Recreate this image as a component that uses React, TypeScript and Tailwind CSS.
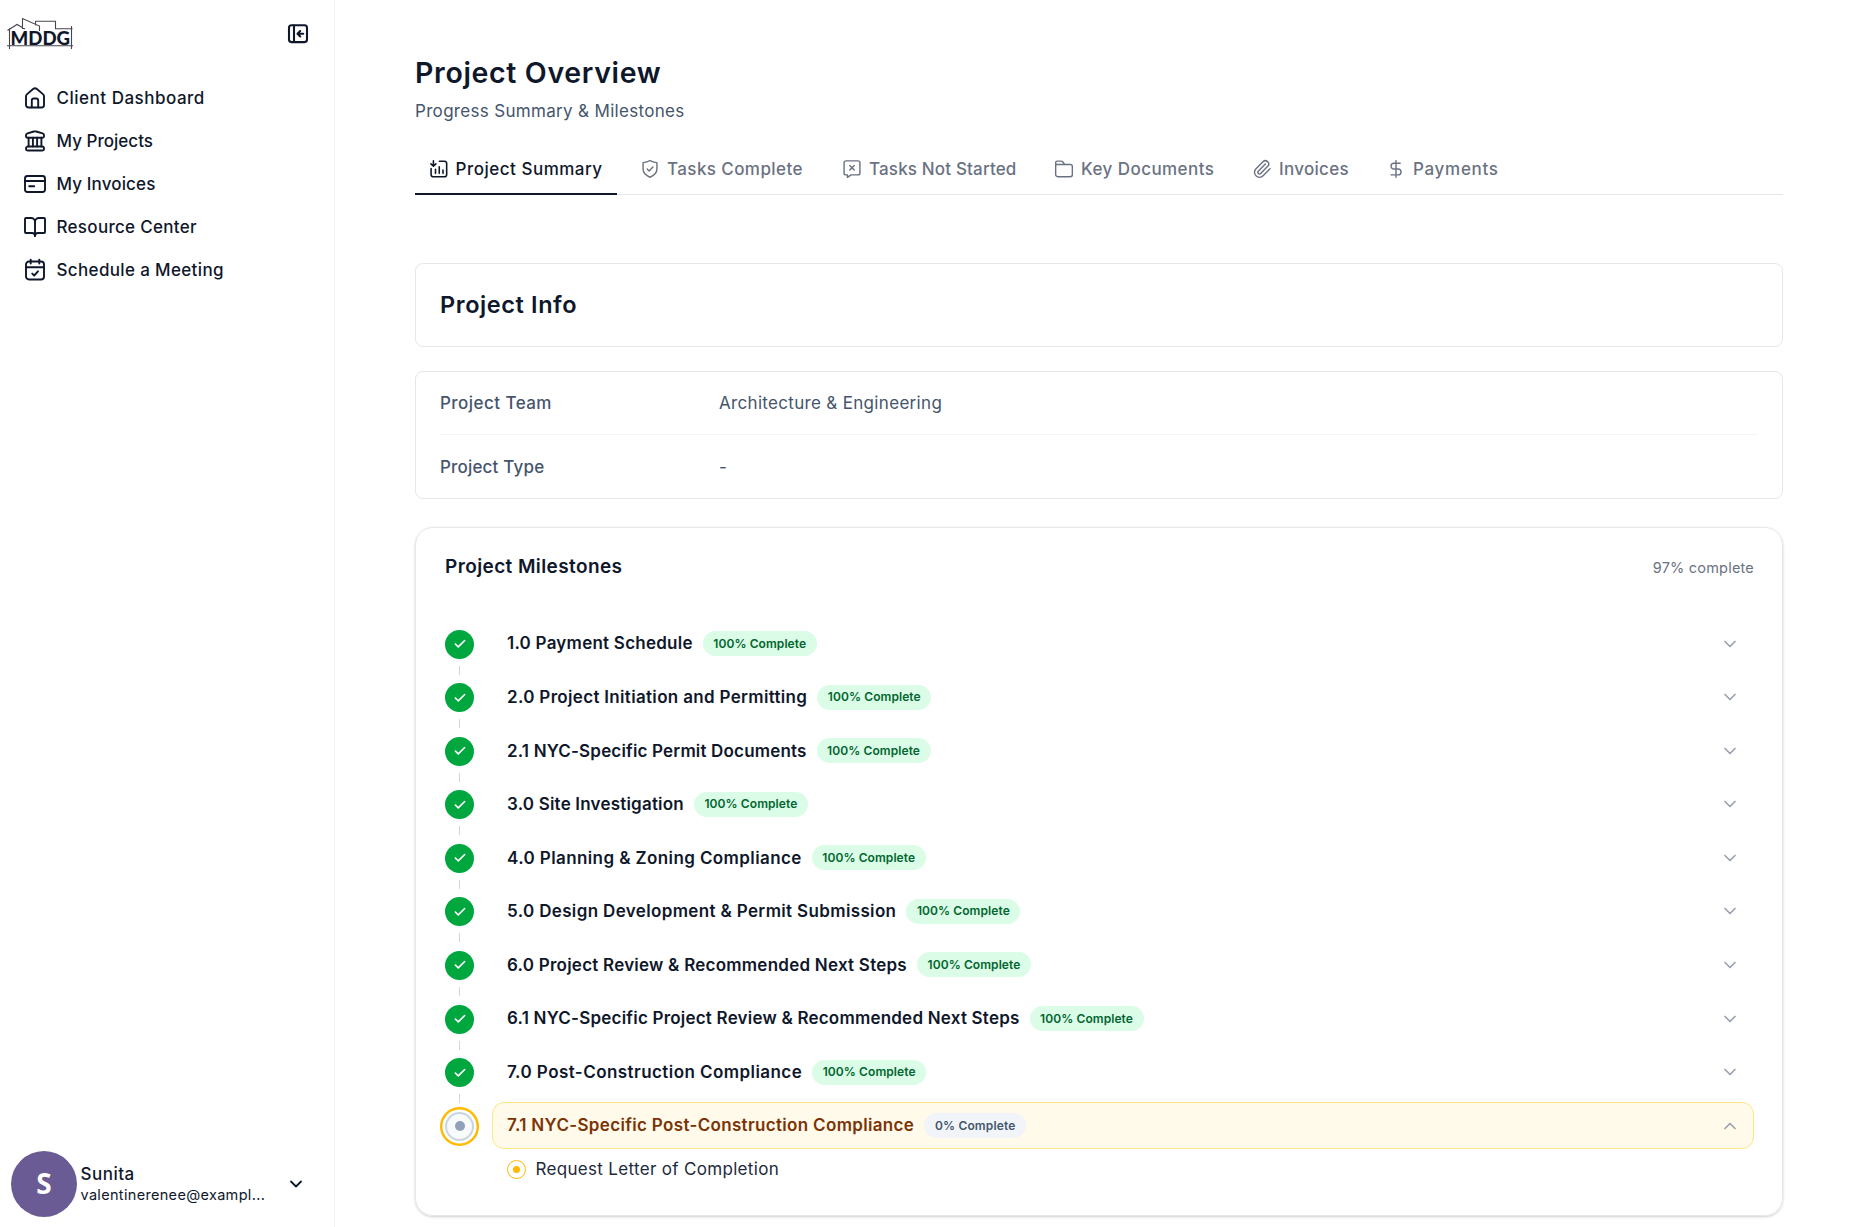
import type { ReactNode } from 'react';
import { BookOpen, Check, ChevronDown, ChevronUp, DollarSign, Paperclip } from 'lucide-react';

const Icon = ({ size = 24, stroke = 1.9, children }: { size?: number; stroke?: number; children: ReactNode }) => (
  <svg width={size} height={size} viewBox="0 0 24 24" fill="none" stroke="currentColor" strokeWidth={stroke} strokeLinecap="round" strokeLinejoin="round" className="shrink-0">
    {children}
  </svg>
);

const HomeIcon = () => (
  <Icon>
    <path d="M3 10.4c0-.9.4-1.700 1.100-2.300l6-5.100a3 3 0 0 1 3.800 0l6 5.100c.7.6 1.100 1.400 1.100 2.300V19a2.500 2.500 0 0 1-2.500 2.500h-13A2.500 2.500 0 0 1 3 19z" />
    <path d="M8.800 21.300v-6.800a2 2 0 0 1 2-2h2.400a2 2 0 0 1 2 2v6.800" />
  </Icon>
);

const BankIcon = () => (
  <Icon stroke={1.9}>
    <path d="M3 6.200c0-1 .6-1.500 1.500-1.800l6.300-1.900c.8-.2 1.600-.2 2.400 0l6.300 1.900c.9.3 1.500.8 1.500 1.800v1c0 .9-.7 1.500-1.500 1.500h-15C3.700 8.700 3 8.100 3 7.200z" />
    <path d="M5.600 8.800v8.600M9.900 8.800v8.600M14.100 8.800v8.600M18.400 8.800v8.600" />
    <path d="M5 17.500h14a2 2 0 0 1 2 2v.5a1.500 1.500 0 0 1-1.500 1.500h-15A1.500 1.500 0 0 1 3 20v-.5a2 2 0 0 1 2-2z" />
  </Icon>
);

const CardIcon = () => (
  <Icon>
    <rect x="2" y="4" width="20" height="16" rx="2.500" />
    <path d="M2.200 9h19.600M6.200 14.200h5" />
  </Icon>
);

const CalendarIcon = () => (
  <Icon>
    <rect x="3" y="3.500" width="18" height="18" rx="3" />
    <path d="M3.200 9.300h17.600M7.700 1.600v4M16.300 1.600v4M9.200 15.600l2 1.900 3.800-4.200" />
  </Icon>
);

const CollapseIcon = () => (
  <Icon stroke={2.1}>
    <rect x="3" y="3.300" width="18" height="16.800" rx="2.500" />
    <path d="M8 3.500v16.400M17.200 11.700h-5.400M14.200 9L11.500 11.700l2.700 2.700" />
  </Icon>
);

const SummaryIcon = () => (
  <Icon size={20}>
    <path d="M12.500 2.700h6.200A2.500 2.500 0 0 1 21.200 5.200v13.300a2.800 2.800 0 0 1-2.800 2.800H5.300a2.800 2.800 0 0 1-2.800-2.800V11.500" />
    <path d="M5.300 2v6.300M2.300 5.800l3 2.800 3-2.800M7.800 12.200v5M12.300 9.200v8M16.800 13.200v4" />
  </Icon>
);

const ShieldIcon = () => (
  <Icon size={20} stroke={1.7}>
    <path d="M12 1.800c2.500 1.700 5 2.300 8.300 2.600v7.600c0 4.700-3.200 7.700-8.300 9.900-5.100-2.200-8.300-5.200-8.300-9.900V4.400C7 4.100 9.500 3.500 12 1.800z" />
    <path d="M8.600 12l2.400 2.300 4.500-4.700" />
  </Icon>
);

const NotStartedIcon = () => (
  <Icon size={20} stroke={1.7}>
    <path d="M4.800 2.200h14.400A2.300 2.300 0 0 1 21.500 4.500v12.200a2.300 2.300 0 0 1-2.300 2.300H11l-4.500 3v-3H4.800a2.300 2.300 0 0 1-2.300-2.300V4.500a2.300 2.300 0 0 1 2.300-2.300z" />
    <path d="M9.300 7.900l5.400 5.400M14.700 7.900l-5.400 5.400" />
  </Icon>
);

const FolderIcon = () => (
  <Icon size={20} stroke={1.7}>
    <path d="M2 18.800V4.500A2 2 0 0 1 4 2.500h4.800c.7 0 1.200.3 1.600.8l2.200 3.200h7.200A2.200 2.200 0 0 1 22 8.700v10.100a2.400 2.400 0 0 1-2.400 2.400H4.400A2.400 2.400 0 0 1 2 18.800z" />
    <path d="M2.200 6.500h10.300" />
  </Icon>
);

const Logo = () => (
  <svg width="68" height="34" viewBox="0 0 68 34" fill="none" stroke="#4a4350" strokeWidth="1.1">
    <path d="M3.500 11.500v20.500M1 28.700h66M65.500 9v23" />
    <path d="M1.500 13.500L11 7.500l8 4.500M16.500 12V1.500L33.500 9v5M29.500 8.500V4.300h20v8M49.500 11.700h17" />
    <text x="4.600" y="27.600" textLength="59.500" lengthAdjust="spacingAndGlyphs" fill="#0f172b" stroke="none" className="font-['Lato'] text-[18.5px] font-black">MDDG</text>
  </svg>
);

const NAV = [
  { label: 'Client Dashboard', icon: <HomeIcon />, tracking: 'tracking-[0.51px]' },
  { label: 'My Projects', icon: <BankIcon />, tracking: 'tracking-[0.02px]' },
  { label: 'My Invoices', icon: <CardIcon />, tracking: 'tracking-[0.13px]' },
  { label: 'Resource Center', icon: <BookOpen size={24} strokeWidth={1.9} />, tracking: 'tracking-[0.3px]' },
  { label: 'Schedule a Meeting', icon: <CalendarIcon />, tracking: 'tracking-[0.35px]' },
];

const TABS = [
  { label: 'Project Summary', icon: <SummaryIcon />, style: 'w-[202px] tracking-[0.51px]' },
  { label: 'Tasks Complete', icon: <ShieldIcon />, style: 'w-[202px] tracking-[0.41px]' },
  { label: 'Tasks Not Started', icon: <NotStartedIcon />, style: 'w-[212px] tracking-[0.16px]' },
  { label: 'Key Documents', icon: <FolderIcon />, style: 'w-[198px] tracking-[0.44px]' },
  { label: 'Invoices', icon: <Paperclip size={20} strokeWidth={1.7} />, style: 'w-[134px] tracking-[0.3px]' },
  { label: 'Payments', icon: <DollarSign size={20} strokeWidth={1.7} />, style: 'w-[150px] tracking-[0.7px]' },
];

const MILESTONES = [
  { title: '1.0 Payment Schedule', pct: 100, tracking: 'tracking-[0.24px]' },
  { title: '2.0 Project Initiation and Permitting', pct: 100, tracking: 'tracking-[0.325px]' },
  { title: '2.1 NYC-Specific Permit Documents', pct: 100, tracking: 'tracking-[0.17px]' },
  { title: '3.0 Site Investigation', pct: 100, tracking: 'tracking-[0.2px]' },
  { title: '4.0 Planning & Zoning Compliance', pct: 100, tracking: 'tracking-[0.4px]' },
  { title: '5.0 Design Development & Permit Submission', pct: 100, tracking: 'tracking-[0.355px]' },
  { title: '6.0 Project Review & Recommended Next Steps', pct: 100, tracking: 'tracking-[0.24px]' },
  { title: '6.1 NYC-Specific Project Review & Recommended Next Steps', pct: 100, tracking: 'tracking-[0.21px]' },
  { title: '7.0 Post-Construction Compliance', pct: 100, tracking: 'tracking-[0.435px]' },
  { title: '7.1 NYC-Specific Post-Construction Compliance', pct: 0, tracking: 'tracking-[0.33px]' },
];

function Sidebar() {
  return (
    <aside className="flex h-full w-[335px] shrink-0 flex-col border-r border-gray-100">
      <div className="flex h-[68px] items-center justify-between pl-1.5 pr-6">
        <Logo />
        <button className="text-slate-900"><CollapseIcon /></button>
      </div>
      <nav className="mt-2 flex flex-col pl-[23px]">
        {NAV.map((item) => (
          <a key={item.label} className="flex h-[43px] items-center gap-[9.5px] text-slate-900">
            {item.icon}
            <span className={`pt-0.5 text-[17px] font-medium ${item.tracking}`}>{item.label}</span>
          </a>
        ))}
      </nav>
      <div className="mb-[10.5px] mt-auto flex items-center pl-[11px]">
        <div className="flex size-[66px] shrink-0 items-center justify-center rounded-full bg-[#6b5b95] pb-0.5 font-['Open_Sans'] text-[28px] font-bold text-white">S</div>
        <div className="ml-[3.5px] w-[200px] text-slate-900">
          <p className="text-[17px] font-medium leading-[22px] tracking-[0.5px]">Sunita</p>
          <p className="text-[14.5px] leading-[20px] tracking-[0.32px]">valentinerenee@exampl...</p>
        </div>
        <ChevronDown size={20} strokeWidth={2.2} className="ml-[5px] text-slate-900" />
      </div>
    </aside>
  );
}

function Milestone({ title, pct, tracking, last }: { title: string; pct: number; tracking: string; last: boolean }) {
  const done = pct === 100;
  return (
    <div className={`flex ${last ? 'h-[46.4px]' : 'h-[53.55px]'}`}>
      <div className="flex w-[29px] shrink-0 flex-col items-center pt-[9.2px]">
        {done ? (
          <div className="flex size-[29px] shrink-0 items-center justify-center rounded-full bg-[#00a63e] text-white">
            <Check size={14} strokeWidth={2.8} />
          </div>
        ) : (
          <div className="flex size-[29px] shrink-0 items-center justify-center rounded-full border-[2.3px] border-slate-300 bg-slate-50 ring-[2.4px] ring-amber-400 ring-offset-[2.6px]">
            <div className="size-[10px] rounded-full bg-slate-400" />
          </div>
        )}
        {!last && <div className="mt-[7px] h-[9px] w-px shrink-0 bg-gray-300" />}
      </div>
      <div className={`ml-[18px] flex h-[46.4px] flex-1 items-center rounded-xl border pl-[14px] pr-[13.5px] ${done ? 'border-transparent' : 'border-amber-200 bg-[#fffaea]'}`}>
        <span className={`pt-px text-[17px] font-semibold ${tracking} ${done ? 'text-slate-900' : 'text-amber-900'}`}>{title}</span>
        <span className={`ml-[10px] flex h-[25px] items-center justify-center rounded-full text-[12px] font-semibold ${done ? 'w-[114px] bg-green-100 tracking-[0.08px] text-green-800' : 'w-[102px] bg-slate-100 tracking-[0.15px] text-slate-600'}`}>
          {pct}% Complete
        </span>
        {done
          ? <ChevronDown size={20} className="ml-auto text-gray-400" />
          : <ChevronUp size={20} className="ml-auto text-gray-400" />}
      </div>
    </div>
  );
}

export default function App() {
  return (
    <div className="flex h-[1227px] overflow-hidden bg-white font-['Inter',sans-serif]">
      <Sidebar />
      <main className="flex flex-1 flex-col pl-20 pr-[77px] pt-[51px]">
        <h1 className="text-[28.5px] font-semibold leading-[44px] tracking-[0.66px] text-slate-900">Project Overview</h1>
        <p className="mt-[3px] text-[17px] leading-[26px] tracking-[0.32px] text-slate-600">Progress Summary &amp; Milestones</p>

        <div className="mt-[19px] flex h-[52px] border-b border-gray-200">
          {TABS.map((tab, i) => (
            <button
              key={tab.label}
              className={`flex h-[52px] shrink-0 items-center whitespace-nowrap border-b-2 pt-[2px] pl-[13.5px] text-[17px] font-medium ${tab.style} ${i === 0 ? 'mr-[9.5px] border-slate-900 text-slate-900' : 'border-transparent text-gray-500'}`}
            >
              {tab.icon}
              <span className="ml-[7px] pt-px">{tab.label}</span>
            </button>
          ))}
        </div>

        <section className="mt-[68px] flex h-[84px] items-center rounded-lg border border-gray-200 px-6">
          <h2 className="text-[23.5px] font-semibold tracking-[0.6px] text-slate-900">Project Info</h2>
        </section>

        <section className="mt-6 rounded-lg border border-gray-200 px-6 text-[17px] text-slate-600">
          <div className="flex h-[63px] items-center border-b border-gray-100 pt-0.5">
            <span className="w-[279px] font-medium tracking-[0.45px]">Project Team</span>
            <span className="tracking-[0.32px]">Architecture &amp; Engineering</span>
          </div>
          <div className="flex h-[63px] items-center pt-0.5">
            <span className="w-[279px] font-medium tracking-[0.18px]">Project Type</span>
            <span>-</span>
          </div>
        </section>

        <section className="mt-[28px] h-[689px] shrink-0 rounded-[18px] border border-gray-200 pl-[29px] pr-[28px] pt-[25px] shadow-[0_1px_3px_rgba(0,0,0,0.12),0_1px_2px_rgba(0,0,0,0.08)]">
          <div className="mb-[40.5px] flex h-[27px] items-center justify-between">
            <h3 className="pt-0.5 text-[19px] font-semibold tracking-[0.4px] text-slate-900">Project Milestones</h3>
            <span className="pt-0.5 text-[14.5px] tracking-[0.2px] text-gray-500">97% complete</span>
          </div>
          {MILESTONES.map((m, i) => (
            <Milestone key={m.title} {...m} last={i === MILESTONES.length - 1} />
          ))}
          <div className="flex h-[41px] items-center pl-[62px]">
            <div className="flex size-[19px] items-center justify-center rounded-full border-[1.5px] border-amber-400">
              <div className="size-[7px] rounded-full bg-amber-400" />
            </div>
            <span className="ml-[9.5px] text-[17px] tracking-[0.32px] text-slate-800">Request Letter of Completion</span>
          </div>
        </section>
      </main>
    </div>
  );
}
